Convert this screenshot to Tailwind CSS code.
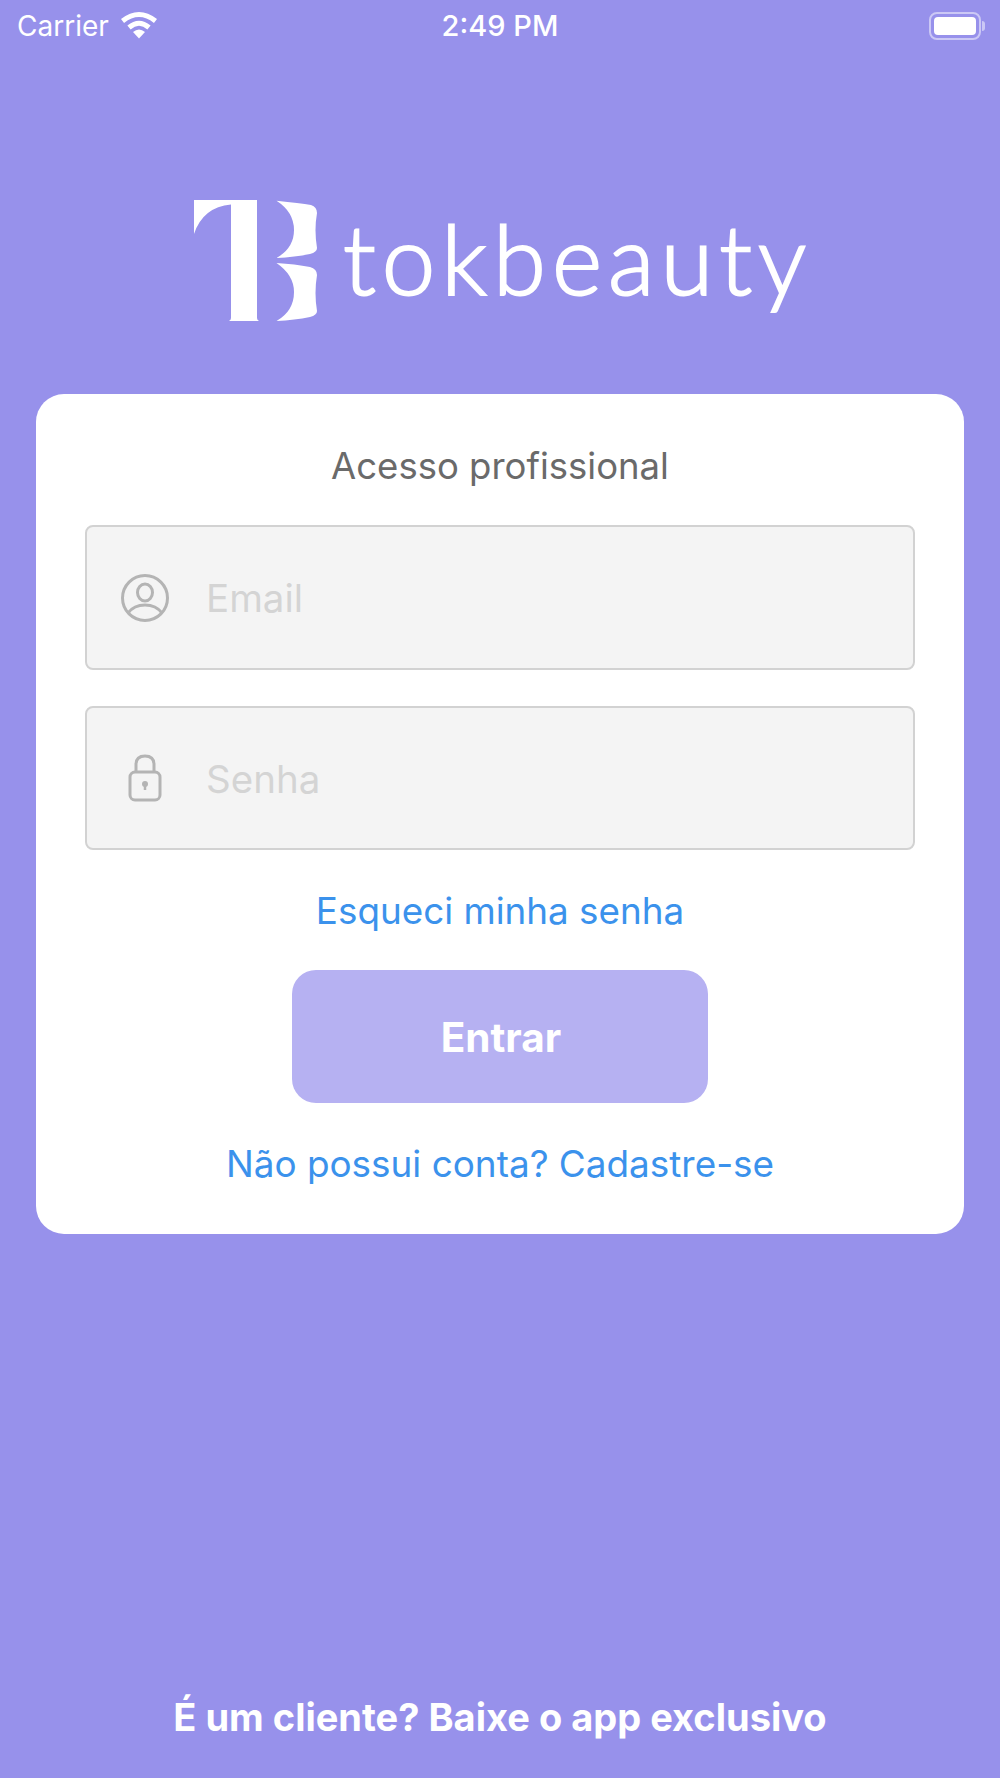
<!DOCTYPE html>
<html lang="pt-BR">
<head>
    <meta charset="UTF-8">
    <meta name="viewport" content="width=device-width, initial-scale=1.0">
    <title>Tokbeauty - Acesso profissional</title>
    <script src="https://cdn.jsdelivr.net/npm/@tailwindcss/browser@4"></script>
</head>
<body class="bg-[#9791eb] font-['Inter',sans-serif]">
    <div class="h-[1778px] flex flex-col overflow-hidden">
        <!-- Status bar -->
        <div class="h-[50px] pl-[17px] pr-[15px] pt-[1px] grid grid-cols-3 items-center text-white text-[28px]">
            <div class="flex items-center gap-[12px]">
                <span>Carrier</span>
                <svg class="-mt-[1px]" width="36" height="28" viewBox="0 0 36 28" fill="none" stroke="white" stroke-width="5">
                    <path d="M1.500 10 Q18 -3 34.500 10"/>
                    <path d="M8 16.500 Q18 8 28 16.500"/>
                    <path d="M12 21 L18 27.500 L24 21 Q18 16 12 21 Z" fill="white" stroke="none"/>
                </svg>
            </div>
            <div class="text-center text-[29px] font-medium pr-[2px]">2:49 PM</div>
            <div class="flex justify-end items-center mt-[1px]">
                <div class="w-[52px] h-[28px] rounded-[8px] border-2 border-white/50 p-[3px]">
                    <div class="h-full bg-white rounded-[4px]"></div>
                </div>
                <div class="w-[3px] h-[10px] ml-[1px] bg-white/50 rounded-r-full"></div>
            </div>
        </div>

        <!-- Logo -->
        <div class="mt-[149px] pl-[194px] flex items-center">
            <svg width="124" height="124" viewBox="194 199 124 124" fill="white">
                <path d="M194 200 H257 V318 Q257 320 259 321 H229 Q231 320 231 318 V204.500 Q203 207 194 234 Z"/>
                <path d="M276.500 200.700 Q300 203 311 205 Q317 207 317 213 Q314 230 317 248 Q317 252 310 254 Q295 257 276.500 258 Q294 248 294 230 Q294 212 276.500 200.700 Z"/>
                <path d="M276.500 263 Q295 264 310 267 Q317 269 317 275 Q314 293 317 311 Q317 315 310 317 Q295 320 276.500 321 Q294 311 294 292 Q294 275 276.500 263 Z"/>
            </svg>
            <span class="ml-[25px] mb-[6px] text-white text-[96px] leading-none font-light font-['Lato',sans-serif] tracking-[6px] [-webkit-text-stroke:2px_white]">tokbeauty</span>
        </div>

        <!-- Login card -->
        <div class="mt-[71px] mx-[36px] h-[840px] bg-white rounded-[28px] px-[49px] pt-[46px] flex flex-col items-stretch">
            <h1 class="text-center text-[36.500px] leading-[52px] text-[#6a6a6a]">Acesso profissional</h1>
            <div class="mt-[33px] h-[145px] bg-[#f4f4f4] border-2 border-[#d2d2d2] rounded-[8px] flex items-center pl-[34px]">
                <svg width="48" height="48" viewBox="0 0 48 48" fill="none" stroke="#b4b4b4" stroke-width="3">
                    <circle cx="24" cy="24" r="22.500"/>
                    <ellipse cx="24" cy="18.500" rx="7.500" ry="8.500"/>
                    <path d="M7 39 Q13 31 24 31 Q35 31 41 39"/>
                </svg>
                <input type="text" placeholder="Email" class="ml-[37px] pt-[2px] flex-1 bg-transparent text-[38.500px] outline-none placeholder:text-[#d4d4d4]">
            </div>
            <div class="mt-[36px] h-[144px] bg-[#f4f4f4] border-2 border-[#d2d2d2] rounded-[8px] flex items-center pl-[41px]">
                <svg width="34" height="48" viewBox="0 0 34 48" fill="none" stroke="#b4b4b4" stroke-width="3">
                    <rect x="2" y="18" width="30" height="28" rx="5"/>
                    <path d="M8 18 V10.500 Q8 2 17 2 Q26 2 26 10.500 V18"/>
                    <circle cx="17" cy="30" r="3" fill="#b4b4b4" stroke="none"/>
                    <path d="M17 30 V36" stroke-width="2.500"/>
                </svg>
                <input type="password" placeholder="Senha" class="ml-[44px] pt-[4px] flex-1 bg-transparent text-[38.500px] outline-none placeholder:text-[#d4d4d4]">
            </div>
            <a href="#" class="mt-[35px] text-center text-[36.800px] leading-[52px] text-[#3b92ec]">Esqueci minha senha</a>
            <button class="mt-[33px] self-center w-[416px] h-[133px] rounded-[24px] bg-[#b6b1f2] pt-[3px] pl-[2px] text-white text-[40.500px] font-bold">Entrar</button>
            <a href="#" class="mt-[35px] text-center text-[36.900px] leading-[52px] text-[#3b92ec]">Não possui conta? Cadastre-se</a>
        </div>

        <!-- Footer link -->
        <a href="#" class="mt-auto mb-[36px] text-center text-white text-[38px] leading-[50px] font-bold">É um cliente? Baixe o app exclusivo</a>
    </div>
</body>
</html>
